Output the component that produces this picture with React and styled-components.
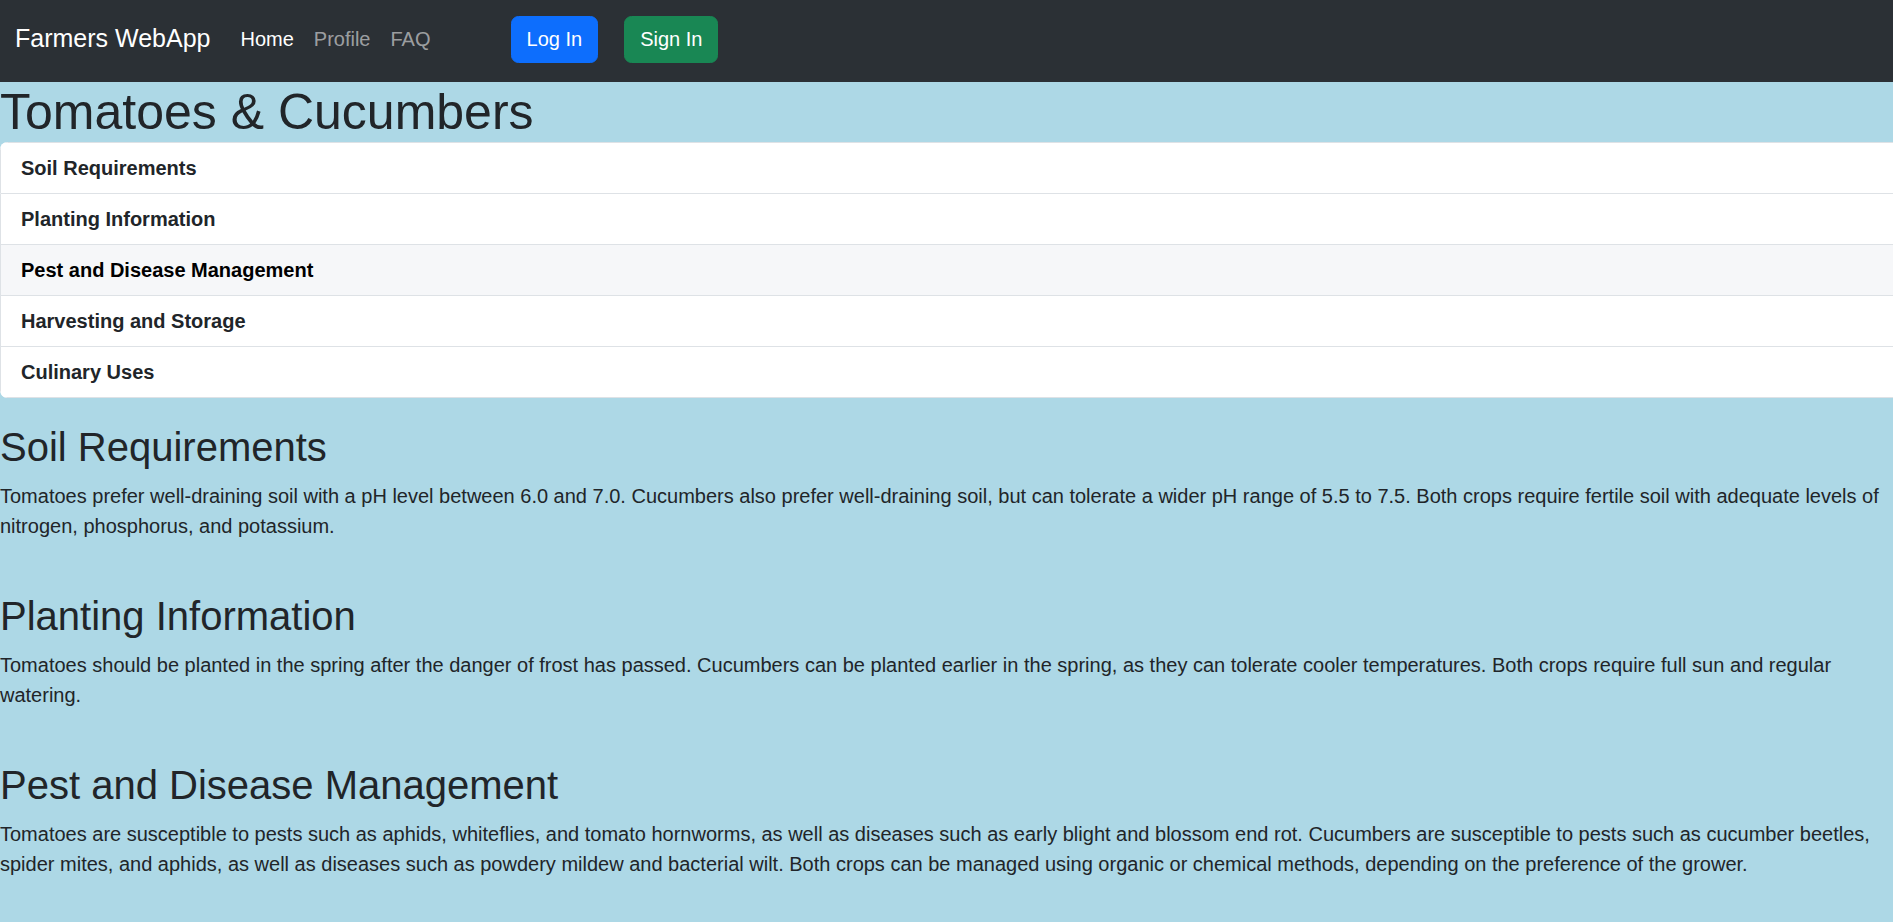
import React from 'react';
import styled, { createGlobalStyle } from 'styled-components';

const GlobalStyle = createGlobalStyle`
  * { box-sizing: border-box; }
  body {
    margin: 0;
    background: lightblue;
    font-family: "Liberation Sans", Arial, sans-serif;
    font-size: 20px;
    line-height: 1.5;
    color: #212529;
    overflow-x: hidden;
  }
`;

const sections = [
    {
        title: 'Soil Requirements',
        text: 'Tomatoes prefer well-draining soil with a pH level between 6.0 and 7.0. Cucumbers also prefer well-draining soil, but can tolerate a wider pH range of 5.5 to 7.5. Both crops require fertile soil with adequate levels of nitrogen, phosphorus, and potassium.',
    },
    {
        title: 'Planting Information',
        text: 'Tomatoes should be planted in the spring after the danger of frost has passed. Cucumbers can be planted earlier in the spring, as they can tolerate cooler temperatures. Both crops require full sun and regular watering.',
    },
    {
        title: 'Pest and Disease Management',
        text: 'Tomatoes are susceptible to pests such as aphids, whiteflies, and tomato hornworms, as well as diseases such as early blight and blossom end rot. Cucumbers are susceptible to pests such as cucumber beetles, spider mites, and aphids, as well as diseases such as powdery mildew and bacterial wilt. Both crops can be managed using organic or chemical methods, depending on the preference of the grower.',
    },
    { title: 'Harvesting and Storage', text: '' },
    { title: 'Culinary Uses', text: '' },
];

const App = () => {
    return (
        <Page>
            <GlobalStyle />
            <Navbar>
                <Brand href="#">Farmers WebApp</Brand>
                <NavLinks>
                    <NavLink href="#" $active>
                        Home
                    </NavLink>
                    <NavLink href="#">Profile</NavLink>
                    <NavLink href="#">FAQ</NavLink>
                </NavLinks>
                <Actions>
                    <Button $bg="#0d6efd">Log In</Button>
                    <Button $bg="#198754">Sign In</Button>
                </Actions>
            </Navbar>
            <main>
                <Title>Tomatoes &amp; Cucumbers</Title>
                <Accordion>
                    {sections.map((s, i) => (
                        <AccordionItem key={s.title}>
                            <AccordionButton $hover={i === 2}>{s.title}</AccordionButton>
                        </AccordionItem>
                    ))}
                </Accordion>
                <Content>
                    {sections
                        .filter((s) => s.text)
                        .map((s) => (
                            <Section key={s.title}>
                                <SectionTitle>{s.title}</SectionTitle>
                                <p>{s.text}</p>
                            </Section>
                        ))}
                </Content>
            </main>
        </Page>
    );
};

const Page = styled.div`
    min-height: 100vh;
    overflow-x: hidden;
`;

const Navbar = styled.nav`
    display: flex;
    align-items: center;
    height: 82px;
    padding: 0 15px 4px;
    background: #2b3035;
`;

const Brand = styled.a`
    margin-right: 20px;
    padding: 6px 0;
    font-size: 25px;
    line-height: 1.5;
    color: #fff;
    text-decoration: none;
`;

const NavLinks = styled.div`
    display: flex;
`;

const NavLink = styled.a`
    padding: 10px;
    color: ${(p) => (p.$active ? '#fff' : 'rgba(255, 255, 255, 0.55)')};
    text-decoration: none;
`;

const Actions = styled.div`
    display: flex;
    gap: 26px;
    margin-left: 70px;
`;

const Button = styled.button`
    padding: 7.5px 15px;
    border: 1px solid ${(p) => p.$bg};
    border-radius: 7.5px;
    background: ${(p) => p.$bg};
    color: #fff;
    font-family: inherit;
    font-size: 20px;
    line-height: 1.5;
`;

const Title = styled.h1`
    margin: 0;
    font-size: 50px;
    font-weight: 500;
    line-height: 1.2;
`;

const Accordion = styled.div`
    width: calc(100% + 24px);
    background: #fff;
    border-radius: 7.5px;
    overflow: hidden;
`;

const AccordionItem = styled.div`
    border: 1px solid #dee2e6;

    &:first-of-type {
        border-radius: 7.5px 7.5px 0 0;
    }

    &:not(:first-of-type) {
        border-top: 0;
    }

    &:last-of-type {
        border-radius: 0 0 7.5px 7.5px;
    }
`;

const AccordionButton = styled.div`
    padding: 10px 20px;
    font-size: 20px;
    font-weight: 700;
    line-height: 1.5;
    color: ${(p) => (p.$hover ? '#000' : '#212529')};
    background: ${(p) => (p.$hover ? '#f6f7f9' : '#fff')};
`;

const Content = styled.div`
    padding-top: 25px;
`;

const Section = styled.section`
    padding-bottom: 31px;

    p {
        margin: 0 0 20px;
    }
`;

const SectionTitle = styled.h2`
    margin: 0 0 10px;
    font-size: 40px;
    font-weight: 500;
    line-height: 1.2;
`;

export default App;
